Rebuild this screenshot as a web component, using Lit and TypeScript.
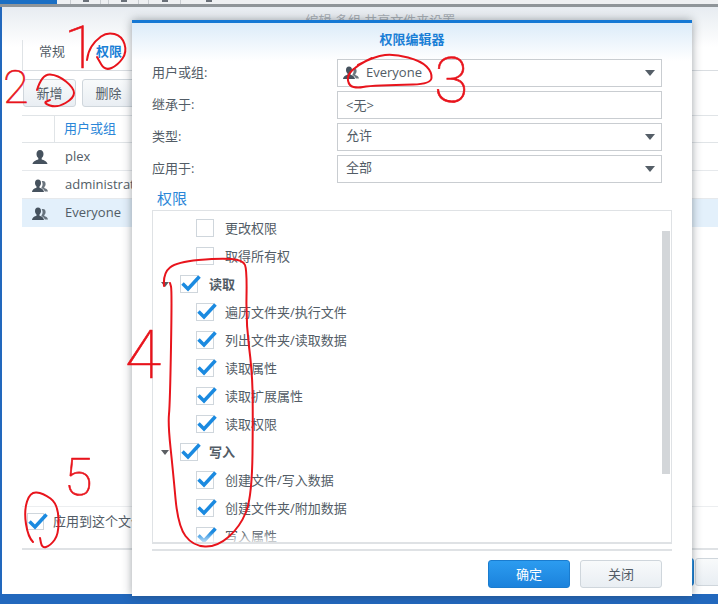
import { LitElement, html, css, svg } from "lit";
import { customElement } from "lit/decorators.js";

type Pt = [number, number];

function smooth(p: Pt[]): string {
  let d = `M${p[0][0]} ${p[0][1]}`;
  for (let i = 1; i < p.length - 1; i++) {
    const mx = (p[i][0] + p[i + 1][0]) / 2;
    const my = (p[i][1] + p[i + 1][1]) / 2;
    d += ` Q${p[i][0]} ${p[i][1]} ${mx} ${my}`;
  }
  const l = p[p.length - 1];
  return d + ` L${l[0]} ${l[1]}`;
}

const LOOPS: Pt[][] = [
  [[87, 60], [88, 52], [95, 41], [107, 32], [122, 36], [127, 52], [118, 65], [105, 71], [97, 57]],
  [[37, 90], [42, 74], [58, 75], [74, 88], [74, 98], [57, 108], [43, 103], [50, 100]],
  [[358, 65], [375, 56], [395, 54], [421, 61], [432, 72], [431, 84], [395, 85], [368, 86], [358, 88], [349, 86], [347, 75], [358, 65], [372, 58]],
  [[164, 286], [163, 273], [177, 262], [220, 258], [243, 260], [247, 270], [246, 323], [252, 370], [253, 410], [252, 497], [240, 527], [217, 547], [193, 546], [178, 526], [173, 471], [168, 424], [170, 404], [172, 290], [170, 283]],
  [[33, 542], [28, 537], [24, 511], [30, 492], [43, 493], [58, 504], [59, 534], [50, 546], [42, 548], [40, 538]],
];

const person = html`<svg class="ico" viewBox="0 0 16 16"><path d="M8 1c2.300 0 3.500 1.700 3.500 4 0 1.800-.8 3.300-1.800 4.100v1.300c2 .7 5.300 1.500 5.800 4.600H.5c.5-3.100 3.800-3.900 5.800-4.600V9.100C5.300 8.300 4.500 6.800 4.500 5 4.500 2.700 5.700 1 8 1z"/></svg>`;
const people = html`<svg class="ico" viewBox="0 0 16 16"><path d="M11 4c1.700 0 2.600 1.300 2.600 3 0 1.300-.5 2.400-1.300 3v1c1.500.5 3.300 1 3.700 3.500h-3.200c-.4-1.700-1.700-2.700-3.300-3.300V10.200c.9-.9 1.200-2.300 1-3.700-.1-.9-.4-1.700-.8-2.200.2-.2.5-.3 1.100-.3z" opacity=".8"/><path d="M6 2.500c2 0 3 1.500 3 3.500 0 1.500-.6 2.800-1.500 3.500v1.200c1.700.6 4 1.300 4.500 4.300H0c.5-3 2.800-3.700 4.500-4.300V9.500C3.600 8.800 3 7.500 3 6c0-2 1-3.500 3-3.500z"/></svg>`;
const check = html`<svg class="tick" viewBox="0 0 22 18"><path d="M2.500 9.500 8 15 19.500 2.500" /></svg>`;

const ROWS: [string, number, boolean][] = [
  ["更改权限", 1, false],
  ["取得所有权", 1, false],
  ["读取", 0, true],
  ["遍历文件夹/执行文件", 1, true],
  ["列出文件夹/读取数据", 1, true],
  ["读取属性", 1, true],
  ["读取扩展属性", 1, true],
  ["读取权限", 1, true],
  ["写入", 0, true],
  ["创建文件/写入数据", 1, true],
  ["创建文件夹/附加数据", 1, true],
  ["写入属性", 1, true],
];

@customElement("app-root")
export class AppRoot extends LitElement {
  static styles = css`
    :host { display: block; width: 718px; height: 604px; position: relative; overflow: hidden;
      background: #2268bd; color: #525c66;
      font: 13px "Open Sans", "Noto Sans CJK SC", sans-serif; }
    * { box-sizing: border-box; }
    .top { height: 4px; display: flex; background: #eef0f2; }
    .top .blue { width: 57px; background: #1b6fc4; }
    .top .sep { width: 1px; background: #c9cdd1; }
    .top i { display: flex; justify-content: center; }
    .top b { width: 6px; height: 2px; background: #6a7078; display: block; }
    .top .g1 { width: 13px; } .top .g2 { width: 29px; } .top .g3 { width: 7px; } .top .g4 { width: 9px; } .top .g5 { width: 31px; }
    .top .g6 { width: 18px; }
    .top .wide { width: 20px; }
    .rule { height: 3px; background: #8f9599; }
    .win { margin-left: 2px; height: 587px; display: flex; flex-direction: column; padding-left: 20px;
      background: linear-gradient(#e7ecf1, #fff 40px, #fff); }
    .wt { height: 33px; text-align: center; padding: 6px 0 0 0; color: #a9afb5; line-height: 14px; margin-left: 12px; margin-right: -9px; }
    .tabs { height: 31px; display: flex; border-bottom: 1px solid #d9dde1; }
    .tab { height: 30px; line-height: 22px; width: 74px; padding-left: 16px; border-left: 1px solid #dfe3e6; }
    .tab.on { color: #1a7fd6; font-weight: 700; border: 0; padding-left: 0; }
    .bar { display: flex; gap: 6px; padding: 8px 0 0 1px; }
    .btn { height: 28px; width: 53px; border: 1px solid #cfd6dc; border-radius: 3px; display: flex; align-items: center; justify-content: center;
      background: linear-gradient(#f8fafb, #e9eef3); color: #525c66; padding-bottom: 2px; }
    .table { margin-top: 8px; }
    .tr { height: 28px; display: flex; align-items: center; border-bottom: 1px solid #e6e9ec; }
    .tr span { padding-bottom: 2px; }
    .tr.head { height: 28px; border-top: 1px solid #e0e4e7; border-bottom: 1px solid #e0e4e7; color: #2a86d8; }
    .tr.head span { padding-bottom: 3px; margin-left: -1px; }
    .tr.sel { background: #e3f0fb; border-bottom-color: #e3f0fb; }
    .tr .c0 { width: 33px; height: 100%; display: flex; align-items: center; justify-content: center; flex: none; margin-right: 10px; }
    .tr.head .c0 { border-right: 1px solid #e0e4e7; }
    .tr.body .c0 { justify-content: flex-start; padding-left: 10px; width: 43px; margin-right: 0; }
    .ico { width: 16px; height: 16px; fill: #46525e; flex: none; }
    .spacer { flex: 1; }
    .apply { height: 44px; border-top: 1px solid #eceef0; border-bottom: 2px solid #dfe2e5; display: flex; align-items: center; padding: 0 0 13px 5px; gap: 9px; }
    .apply .box { width: 17px; height: 17px; }
    .apply span:last-child { padding-bottom: 2px; }
    .foot { display: flex; gap: 1px; padding: 8px 0 8px 590px; }
    .foot .btn { flex: none; }
    .foot .btn.p { width: 82px; }
    .foot .btn.c { width: 40px; }
    .p { background: linear-gradient(#2c9cf0, #1b82dc) !important; border-color: #1a7ccf !important; color: #fff !important; }

    .dlg { position: absolute; left: 132px; top: 20px; width: 560px; height: 576px; background: #fff; border-top: 3px solid #1578d4;
      box-shadow: 0 0 9px rgba(40, 50, 60, .45); display: flex; flex-direction: column; padding-left: 20px;
      background-image: linear-gradient(#dcecf9, #fff 38px); background-repeat: no-repeat; }
    .dt { height: 36px; margin-left: -20px; text-align: center; line-height: 32px; font-weight: 700; color: #1a7fd6; }
    .form { display: flex; flex-direction: column; gap: 4px; }
    .fr { display: flex; height: 28px; align-items: center; }
    .fr label { width: 185px; flex: none; padding-bottom: 4px; }
    .field { width: 325px; height: 28px; border: 1px solid #c9cdd1; background: #fff; display: flex; align-items: center; padding: 0 0 2px 8px; gap: 7px; position: relative; }
    .field.cjk { padding-bottom: 6px; }
    .field .ico { margin-left: -3px; }
    .caret { position: absolute; right: 6px; top: 10px; width: 0; height: 0; border: 5px solid transparent; border-top: 6px solid #555e67; border-bottom: 0; }
    .perm { color: #2a86d8; font-size: 15px; height: 21px; line-height: 21px; padding-left: 5px; margin-top: 5px; }
    .list { width: 520px; height: 334px; margin-top: 1px; border: 1px solid #dfe2e5; border-bottom: 2px solid #dfe2e5; overflow: hidden; position: relative; padding-top: 3px; }
    .list::after { content: ""; position: absolute; left: 0; right: 12px; bottom: 0; height: 10px; background: linear-gradient(rgba(255,255,255,0), rgba(255,255,255,.7)); }
    .row { height: 28px; display: flex; align-items: center; position: relative; flex: none; }
    .row span:last-child { padding-bottom: 2px; }
    .row.l0 { padding-left: 27px; font-weight: 700; }
    .row.l1 { padding-left: 43px; }
    .row .box { margin-right: 11px; }
    .box { width: 18px; height: 18px; border: 1px solid #cfd6dc; flex: none; position: relative; background: #fff; }
    .tick { position: absolute; left: -1px; top: -2px; width: 22px; height: 18px; fill: none; stroke: #1b8ae0; stroke-width: 3.500; overflow: visible; }
    .row .gc { position: absolute; left: 8px; top: 12px; width: 0; height: 0; border: 4px solid transparent; border-top: 5px solid #5b5f63; border-bottom: 0; }
    .thumb { position: absolute; right: 1px; top: 20px; width: 8px; height: 243px; background: #d3d6d9; }
    .hr { width: 520px; height: 2px; background: #dfe2e5; margin-top: 5px; }
    .df { display: flex; justify-content: flex-end; gap: 10px; width: 510px; padding-top: 9px; }
    .df .btn { width: 82px; }

    .ink { position: absolute; inset: 0; width: 718px; height: 604px; pointer-events: none; fill: none; stroke: #e8141c; stroke-width: 2; stroke-linecap: round; stroke-linejoin: round; }
    .ink text { font-family: Roboto, "Liberation Sans", sans-serif; font-weight: 100; fill: #e8141c; stroke: #e8141c; stroke-width: .6px; }
    .n1 { font-size: 60px; }
    .n2 { font-size: 47px; }
    .n3 { font-size: 63px; }
    .n4 { font-size: 66px; }
    .n5 { font-size: 52px; }
  `;

  private box(on: boolean) {
    return html`<span class="box">${on ? check : ""}</span>`;
  }

  render() {
    return html`
      <div class="top">
        <div class="blue"></div><i class="g1"></i><i class="sep"></i><i class="g2"><b></b></i><i class="sep"></i><i class="g3"></i><i class="sep"></i><i class="g2"><b></b></i><i class="sep"></i><i class="g4"></i><i class="sep"></i><i class="g5"><b></b></i><i class="sep"></i><i class="g6"></i><i class="wide"><b></b></i>
      </div>
      <div class="rule"></div>
      <div class="win">
        <div class="wt">编辑 多组 共享文件夹设置</div>
        <div class="tabs"><div class="tab">常规</div><div class="tab on">权限</div></div>
        <div class="bar"><div class="btn">新增</div><div class="btn">删除</div></div>
        <div class="table">
          <div class="tr head"><div class="c0"></div><span>用户或组</span></div>
          <div class="tr body"><div class="c0">${person}</div><span>plex</span></div>
          <div class="tr body"><div class="c0">${people}</div><span>administrators</span></div>
          <div class="tr body sel"><div class="c0">${people}</div><span>Everyone</span></div>
        </div>
        <div class="spacer"></div>
        <div class="apply">${this.box(true)}<span>应用到这个文件夹、子文件夹及文件</span></div>
        <div class="foot"><div class="btn p"></div><div class="btn c"></div></div>
      </div>

      <div class="dlg">
        <div class="dt">权限编辑器</div>
        <div class="form">
          <div class="fr"><label>用户或组:</label><div class="field">${people}<span>Everyone</span><i class="caret"></i></div></div>
          <div class="fr"><label>继承于:</label><div class="field">&lt;无&gt;</div></div>
          <div class="fr"><label>类型:</label><div class="field cjk">允许<i class="caret"></i></div></div>
          <div class="fr"><label>应用于:</label><div class="field cjk">全部<i class="caret"></i></div></div>
        </div>
        <div class="perm">权限</div>
        <div class="list">
          ${ROWS.map(([t, l, on]) => html`<div class="row l${l}">${l === 0 ? html`<i class="gc"></i>` : ""}${this.box(on)}<span>${t}</span></div>`)}
          <div class="thumb"></div>
        </div>
        <div class="hr"></div>
        <div class="df"><div class="btn p">确定</div><div class="btn">关闭</div></div>
      </div>

      <svg class="ink" viewBox="0 0 718 604">
        ${LOOPS.map((p) => svg`<path d=${smooth(p)} />`)}
        <text class="n1" x="64" y="68">1</text>
        <text class="n2" x="3" y="103">2</text>
        <text class="n3" x="434" y="102">3</text>
        <text class="n4" x="125" y="378">4</text>
        <text class="n5" x="64" y="495">5</text>
      </svg>
    `;
  }
}
